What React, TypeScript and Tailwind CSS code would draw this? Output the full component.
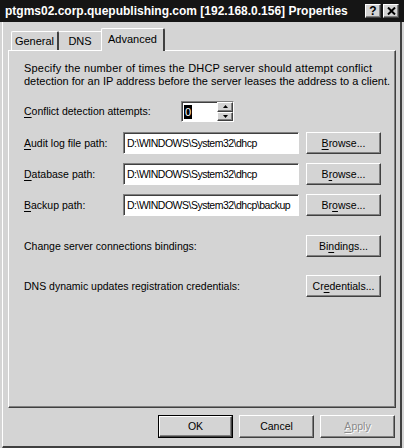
const raised =
  "border border-t-white border-l-white border-r-[#404040] border-b-[#404040] shadow-[inset_-1px_-1px_0_#808080]";
const sunken =
  "border border-t-[#808080] border-l-[#808080] border-r-white border-b-white shadow-[inset_1px_1px_0_#404040]";

// label with one underlined access key letter
const Mnemonic = ({ text, at }: { text: string; at: number }) => (
  <span>
    {text.slice(0, at)}
    <u className="underline-offset-[2px]">{text.charAt(at)}</u>
    {text.slice(at + 1)}
  </span>
);

const Button = ({
  text,
  at,
  disabled,
}: {
  text: string;
  at: number;
  disabled?: boolean;
}) => (
  <button
    type="button"
    className={`w-[75px] h-[22px] flex items-center justify-center bg-[#d4d4d4] ${raised} ${
      disabled ? "text-[#8a8a8a] [text-shadow:1px_1px_0_#fff]" : "text-black"
    }`}
  >
    {at >= 0 ? <Mnemonic text={text} at={at} /> : text}
  </button>
);

const TextBox = ({ value }: { value: string }) => (
  <div
    className={`w-[176px] h-[22px] bg-white flex items-center pl-[3px] overflow-hidden whitespace-nowrap text-[10.5px] tracking-[-0.5px] ${sunken}`}
  >
    {value}
  </div>
);

const PathRow = ({
  label,
  at,
  value,
  browseAt,
  className,
}: {
  label: string;
  at: number;
  value: string;
  browseAt: number;
  className: string;
}) => (
  <div className={`flex items-center ${className}`}>
    <div className="w-[99px]">
      <Mnemonic text={label} at={at} />
    </div>
    <TextBox value={value} />
    <div className="ml-[7px]">
      <Button text="Browse..." at={browseAt} />
    </div>
  </div>
);

export default function App() {
  return (
    <div className="w-[404px] h-[448px] bg-[#d4d4d4] flex flex-col overflow-hidden text-[10.5px] leading-[13px] text-black font-['Liberation_Sans',Arial,sans-serif]">
      {/* title bar */}
      <div className="h-[22px] bg-[#151515] flex items-center pl-[5px] pr-[5px] shrink-0">
        <span className="text-white font-bold text-[12px] whitespace-nowrap">
          ptgms02.corp.quepublishing.com [192.168.0.156] Properties
        </span>
        <div className="ml-auto flex gap-[2px]">
          <div
            className={`w-[16px] h-[14px] bg-[#d4d4d4] flex items-center justify-center font-bold text-[12px] leading-none ${raised}`}
          >
            ?
          </div>
          <div
            className={`w-[16px] h-[14px] bg-[#d4d4d4] flex items-center justify-center ${raised}`}
          >
            <svg width="9" height="8" viewBox="0 0 9 8">
              <path d="M1 0.5 L8 7.5 M8 0.5 L1 7.5" stroke="#000" strokeWidth="2" />
            </svg>
          </div>
        </div>
      </div>

      {/* window body */}
      <div className="flex-1 flex flex-col ml-[2px] mr-[2px] pl-[5px] pr-[4px] border-l border-l-white border-r-2 border-r-[#404040] border-b-2 border-b-[#404040]">
        {/* tabs */}
        <div className="mt-[6px] h-[22px] flex items-end pl-[3px] text-[11px]">
          <div className="h-[19px] w-[48px] flex items-center justify-center border-t border-l border-t-white border-l-white border-r-2 border-r-[#404040] rounded-tl-[2px] rounded-tr-[2px]">
            General
          </div>
          <div className="h-[19px] w-[42px] flex items-center justify-center border-t border-t-white">
            DNS
          </div>
          <div className="relative z-10 -mb-[1px] h-[23px] w-[64px] bg-[#d4d4d4] flex items-start justify-center pt-[4px] border-t border-l border-t-white border-l-white border-r-2 border-r-[#404040] rounded-tl-[2px] rounded-tr-[2px]">
            Advanced
          </div>
        </div>

        {/* tab panel */}
        <div className="h-[358px] flex flex-col pl-[15px] pr-[13px] border border-t-white border-l-white border-r-[#404040] border-b-[#404040] shadow-[inset_-1px_-1px_0_#808080]">
          <p className="mt-[11px] text-[11px] whitespace-nowrap">
            <span className="tracking-[0.2px]">
              Specify the number of times the DHCP server should attempt conflict
            </span>
            <br />
            detection for an IP address before the server leases the address to a client.
          </p>

          <div className="mt-[13px] flex items-center">
            <div className="w-[157px]">
              <Mnemonic text="Conflict detection attempts:" at={0} />
            </div>
            <div className={`w-[53px] h-[21px] bg-white flex items-center ${sunken}`}>
              <div className="flex-1 pl-[2px] flex items-center">
                <span className="bg-black text-white px-[1px] leading-[14px] text-[11px]">0</span>
              </div>
              <div className="w-[16px] h-full flex flex-col">
                <div className={`flex-1 bg-[#d4d4d4] flex items-center justify-center ${raised}`}>
                  <svg width="5" height="3" viewBox="0 0 5 3">
                    <path d="M2.5 0 L5 3 L0 3 Z" fill="#000" />
                  </svg>
                </div>
                <div className={`flex-1 bg-[#d4d4d4] flex items-center justify-center ${raised}`}>
                  <svg width="5" height="3" viewBox="0 0 5 3">
                    <path d="M0 0 L5 0 L2.5 3 Z" fill="#000" />
                  </svg>
                </div>
              </div>
            </div>
          </div>

          <PathRow
            className="mt-[10px]"
            label="Audit log file path:"
            at={0}
            value="D:\WINDOWS\System32\dhcp"
            browseAt={0}
          />
          <PathRow
            className="mt-[9px]"
            label="Database path:"
            at={0}
            value="D:\WINDOWS\System32\dhcp"
            browseAt={1}
          />
          <PathRow
            className="mt-[9px]"
            label="Backup path:"
            at={0}
            value="D:\WINDOWS\System32\dhcp\backup"
            browseAt={2}
          />

          <div className="mt-[19px] flex items-center">
            <div className="w-[282px]">Change server connections bindings:</div>
            <Button text="Bindings..." at={2} />
          </div>
          <div className="mt-[18px] flex items-center">
            <div className="w-[282px]">DNS dynamic updates registration credentials:</div>
            <Button text="Credentials..." at={2} />
          </div>
        </div>

        {/* dialog buttons */}
        <div className="mt-[7px] flex justify-end gap-[6px] pr-[1px]">
          <div className="border border-black">
            <button
              type="button"
              className={`w-[73px] h-[21px] flex items-center justify-center bg-[#d4d4d4] ${raised}`}
            >
              OK
            </button>
          </div>
          <button
            type="button"
            className={`w-[75px] h-[23px] flex items-center justify-center bg-[#d4d4d4] ${raised}`}
          >
            Cancel
          </button>
          <button
            type="button"
            className={`w-[75px] h-[23px] flex items-center justify-center bg-[#d4d4d4] text-[#8a8a8a] [text-shadow:1px_1px_0_#fff] ${raised}`}
          >
            <Mnemonic text="Apply" at={0} />
          </button>
        </div>
      </div>
    </div>
  );
}
